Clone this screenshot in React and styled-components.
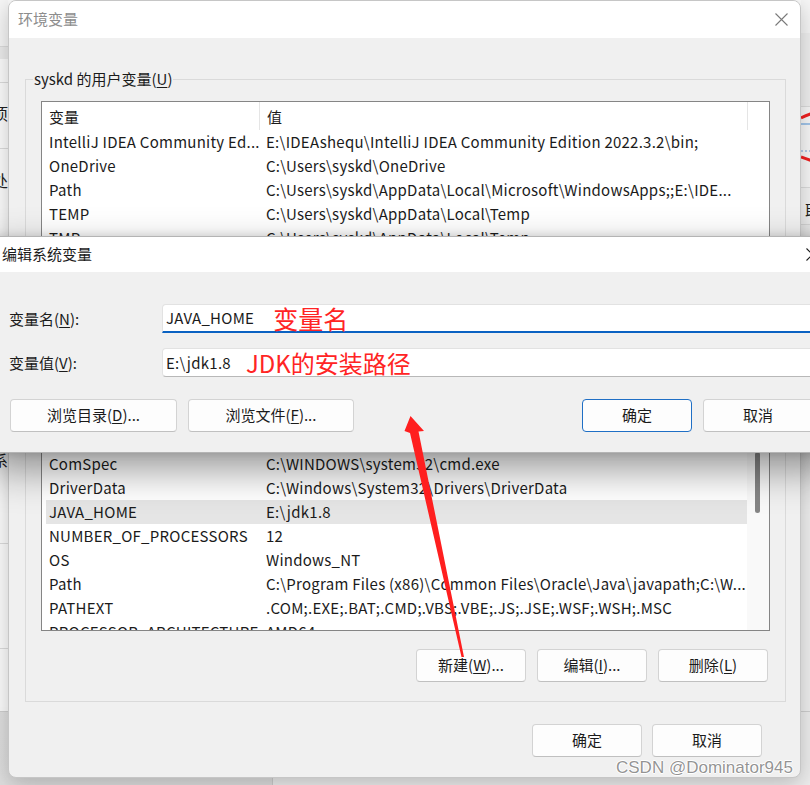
import React from 'react';
import styled, { createGlobalStyle } from 'styled-components';

const GlobalStyle = createGlobalStyle`
  html, body { margin: 0; padding: 0; }
  body {
    font-family: "Noto Sans CJK SC", "Noto Sans", sans-serif;
    font-size: 15px;
    line-height: 20px;
    color: #1b1b1b;
    background: #e4e4e4;
  }
  * { box-sizing: border-box; }
`;

const Desktop = styled.div`
  position: relative;
  width: 810px;
  height: 785px;
  overflow: hidden;
  background: linear-gradient(#ececec, #dedede);
`;

/* ---------- background window (System Properties) ---------- */
const BackWindow = styled.div`
  position: absolute;
  left: -300px;
  top: 0;
  width: 1120px;
  height: 712px;
  display: grid;
  grid-template-columns: 308px 793px 1fr;
  background: #fbfbfb;
  border-bottom: 1px solid #cfcfcf;
`;

const BackColumn = styled.div`
  display: flex;
  flex-direction: column;
  overflow: hidden;
  background: ${p => p.$bg || 'transparent'};
`;

const BackRow = styled.div`
  flex: none;
  height: ${p => p.$h}px;
  background: ${p => p.$bg || '#fcfcfc'};
  border-bottom: ${p => (p.$line ? '1px solid #dcdcdc' : 'none')};
  display: flex;
  align-items: flex-start;
  justify-content: ${p => p.$align || 'flex-end'};
  padding-top: ${p => p.$pt || 0}px;
  padding-left: ${p => p.$pl || 0}px;
  white-space: nowrap;
  overflow: hidden;
`;

const BackText = styled.span`
  font-size: 16px;
  line-height: 22px;
  color: #202020;
`;

const LowerPane = styled.div`
  position: absolute;
  left: 272px;
  top: 712px;
  width: 600px;
  height: 80px;
  background: #ededed;
  border-left: 1px solid #cdcdcd;
`;

/* ---------- generic window parts ---------- */
const Window = styled.div`
  position: absolute;
  left: ${p => p.$x}px;
  top: ${p => p.$y}px;
  width: ${p => p.$w}px;
  background: #f0f0f0;
  border: 1px solid ${p => (p.$active ? '#b4b4b4' : '#c6c6c6')};
  border-radius: 8px;
  box-shadow: ${p =>
    p.$active
      ? '0 16px 40px rgba(0,0,0,0.42), 0 0 10px rgba(0,0,0,0.12)'
      : '0 6px 22px rgba(0,0,0,0.22)'};
  display: flex;
  flex-direction: column;
  overflow: hidden;
`;

const TitleBar = styled.div`
  flex: none;
  height: ${p => p.$h}px;
  background: #ffffff;
  display: flex;
  align-items: center;
  justify-content: space-between;
  padding: 0 ${p => p.$pr}px 1px ${p => p.$pl}px;
  color: ${p => (p.$active ? '#1b1b1b' : '#8d8d8d')};
  font-size: 15px;
`;

const CloseIcon = ({ color }) => (
  <svg width="13" height="13" viewBox="0 0 13 13">
    <path d="M0.5 0.5 L12.5 12.5 M12.5 0.5 L0.5 12.5" stroke={color} strokeWidth="1.1" fill="none" />
  </svg>
);

const Mn = styled.span`
  text-decoration: underline;
  text-underline-offset: 2px;
  text-decoration-thickness: 1px;
`;

const Button = styled.button`
  flex: none;
  width: ${p => p.$w}px;
  height: 33px;
  padding: 0 0 1px;
  margin: 0;
  background: #fdfdfd;
  border: 1px solid ${p => (p.$default ? '#1f6fc5' : '#d3d3d3')};
  border-bottom-color: ${p => (p.$default ? '#1f6fc5' : '#c0c0c0')};
  border-radius: 4px;
  font-family: inherit;
  font-size: 15px;
  line-height: 20px;
  color: #1b1b1b;
`;

/* ---------- main dialog ---------- */
const MainBody = styled.div`
  display: flex;
  flex-direction: column;
  padding: 30px 14px 20px 16px;
`;

const Group = styled.fieldset`
  margin: 0 0 ${p => p.$mb || 0}px 0;
  padding: 11px 15px 19px;
  border: 1px solid #dadada;
  min-width: 0;
`;

const Legend = styled.legend`
  margin-left: -8px;
  padding: 0 1px;
  font-size: 15px;
  line-height: 22px;
  color: #1b1b1b;
`;

const ListBox = styled.div`
  height: ${p => p.$h}px;
  border: 1px solid #858585;
  background: #ffffff;
  display: flex;
  flex-direction: column;
  overflow: hidden;
`;

const ListHeader = styled.div`
  flex: none;
  height: 28px;
  display: grid;
  grid-template-columns: 218px 488px 1fr;
`;

const HeaderCell = styled.div`
  display: flex;
  align-items: center;
  padding: 1px 0 0 7px;
  border-right: ${p => (p.$last ? 'none' : '1px solid #e5e5e5')};
`;

const ListBody = styled.div`
  flex: 1;
  display: flex;
  min-height: 0;
`;

const Rows = styled.div`
  width: 701px;
  margin-left: 4px;
  display: flex;
  flex-direction: column;
`;

const Row = styled.div`
  flex: none;
  height: 24px;
  padding-bottom: 1px;
  display: grid;
  grid-template-columns: 213px 488px;
  align-items: center;
  background: ${p => (p.$selected ? '#e5e5e5' : 'transparent')};
`;

const Cell = styled.div`
  padding-left: ${p => p.$pl}px;
  white-space: nowrap;
  overflow: hidden;
  letter-spacing: 0.25px;
`;

const ScrollTrack = styled.div`
  flex: 1;
  background: ${p => (p.$visible ? '#f9f9f9' : '#ffffff')};
  padding-left: 8px;
`;

const ScrollThumb = styled.div`
  width: 5px;
  height: 61px;
  border-radius: 3px;
  background: #858585;
`;

const ButtonRow = styled.div`
  display: flex;
  justify-content: ${p => p.$justify || 'flex-end'};
  gap: ${p => p.$gap || 11}px;
  margin-top: ${p => p.$mt}px;
  padding: 0 ${p => p.$pr || 0}px 0 ${p => p.$pl || 0}px;
`;

const Spacer = styled.div`
  flex: 1;
`;

/* ---------- edit dialog ---------- */
const EditBody = styled.div`
  display: flex;
  flex-direction: column;
  padding: 32px 24px 20px 20px;
`;

const FieldRow = styled.div`
  display: grid;
  grid-template-columns: 153px 1fr;
  align-items: center;
  margin-top: ${p => p.$mt || 0}px;
`;

const FieldLabel = styled.div`
  font-size: 15px;
  line-height: 20px;
`;

const InputBox = styled.div`
  height: 29px;
  background: #ffffff;
  border: 1px solid #e2e2e2;
  border-bottom: ${p => (p.$focused ? '2px solid #0a62c2' : '1px solid #b8b8b8')};
  border-radius: 4px 0 0 ${p => (p.$focused ? 0 : 4)}px;
  display: flex;
  align-items: center;
  padding-left: 3px;
  white-space: nowrap;
`;

const InputValue = styled.span`
  font-size: 15px;
  letter-spacing: 0.25px;
`;

const RedNote = styled.span`
  margin-left: ${p => p.$ml}px;
  font-size: ${p => p.$size}px;
  line-height: 24px;
  color: #ff2424;
`;

/* ---------- overlays ---------- */
const Annotation = styled.svg`
  position: absolute;
  left: 0;
  top: 0;
  pointer-events: none;
`;

const Watermark = styled.div`
  position: absolute;
  left: 616px;
  top: 758px;
  font-family: "Liberation Sans", Arial, sans-serif;
  font-size: 17px;
  line-height: 20px;
  color: rgba(118, 118, 118, 0.78);
  text-shadow: 1px 0 0 #fff, -1px 0 0 #fff, 0 1px 0 #fff, 0 -1px 0 #fff;
  white-space: nowrap;
`;

const userVars = [
  ['IntelliJ IDEA Community Ed...', 'E:\\IDEAshequ\\IntelliJ IDEA Community Edition 2022.3.2\\bin;'],
  ['OneDrive', 'C:\\Users\\syskd\\OneDrive'],
  ['Path', 'C:\\Users\\syskd\\AppData\\Local\\Microsoft\\WindowsApps;;E:\\IDE...'],
  ['TEMP', 'C:\\Users\\syskd\\AppData\\Local\\Temp'],
  ['TMP', 'C:\\Users\\syskd\\AppData\\Local\\Temp'],
];

const sysVars = [
  ['ComSpec', 'C:\\WINDOWS\\system32\\cmd.exe'],
  ['DriverData', 'C:\\Windows\\System32\\Drivers\\DriverData'],
  ['JAVA_HOME', 'E:\\jdk1.8', true],
  ['NUMBER_OF_PROCESSORS', '12'],
  ['OS', 'Windows_NT'],
  ['Path', 'C:\\Program Files (x86)\\Common Files\\Oracle\\Java\\javapath;C:\\W...'],
  ['PATHEXT', '.COM;.EXE;.BAT;.CMD;.VBS;.VBE;.JS;.JSE;.WSF;.WSH;.MSC'],
  ['PROCESSOR_ARCHITECTURE', 'AMD64'],
];

function VarList({ height, rows, scroll }) {
  return (
    <ListBox $h={height}>
      <ListHeader>
        <HeaderCell>变量</HeaderCell>
        <HeaderCell>值</HeaderCell>
        <HeaderCell $last />
      </ListHeader>
      <ListBody>
        <Rows>
          {rows.map(([name, value, selected]) => (
            <Row key={name + value} $selected={selected}>
              <Cell $pl={3}>{name}</Cell>
              <Cell $pl={7}>{value}</Cell>
            </Row>
          ))}
        </Rows>
        <ScrollTrack $visible={scroll}>{scroll && <ScrollThumb />}</ScrollTrack>
      </ListBody>
    </ListBox>
  );
}

export default function App() {
  return (
    <>
      <GlobalStyle />
      <Desktop>
        <BackWindow>
          <BackColumn>
            <BackRow $h={47} $bg="#f6f6f6" $line />
            <BackRow $h={12} $bg="#ebebeb" />
            <BackRow $h={24} $line />
            <BackRow $h={66} $line $pt={19}>
              <BackText>要进行大多数更改，请使用选项</BackText>
            </BackRow>
            <BackRow $h={300} $pt={20}>
              <BackText>视觉效果，处理器计划，内存使用处</BackText>
            </BackRow>
            <BackRow $h={95} $line>
              <BackText>系统启动、系统故障和调试信息系</BackText>
            </BackRow>
            <BackRow $h={105} $line />
            <BackRow $h={58} />
          </BackColumn>
          <BackColumn />
          <BackColumn $bg="#efefef">
            <BackRow $h={33} $bg="#f6f6f6" />
            <BackRow $h={74} $bg="#efefef" $line />
            <BackRow $h={81} $bg="#f7f7f7" $line>
              <svg width="19" height="81" viewBox="0 0 19 81">
                <path d="M0 11 Q8 7 19 4" stroke="#f02020" strokeWidth="3" fill="none" />
                <line x1="0" y1="17" x2="19" y2="17" stroke="#86b4e4" strokeWidth="1.5" />
                <line x1="0" y1="44" x2="19" y2="44" stroke="#6f9fd6" strokeWidth="1" strokeDasharray="2 2" />
                <path d="M0 50 Q8 53 19 56" stroke="#f02020" strokeWidth="3" fill="none" />
              </svg>
            </BackRow>
            <BackRow $h={37} $bg="#f3f3f3" $line $align="flex-start" $pl={4} $pt={11}>
              <BackText>取消</BackText>
            </BackRow>
          </BackColumn>
        </BackWindow>
        <LowerPane />

        <Window $x={8} $y={0} $w={793}>
          <TitleBar $h={37} $pl={9} $pr={12}>
            <span>环境变量</span>
            <CloseIcon color="#7a7a7a" />
          </TitleBar>
          <MainBody>
            <Group $mb={18}>
              <Legend>
                syskd 的用户变量(<Mn>U</Mn>)
              </Legend>
              <VarList height={200} rows={userVars} />
              <ButtonRow $mt={18} $pr={2} $gap={11}>
                <Button $w={110}>新建(<Mn>N</Mn>)...</Button>
                <Button $w={110}>编辑(<Mn>E</Mn>)...</Button>
                <Button $w={110}>删除(<Mn>D</Mn>)</Button>
              </ButtonRow>
            </Group>
            <Group>
              <Legend>
                系统变量(<Mn>S</Mn>)
              </Legend>
              <VarList height={208} rows={sysVars} scroll />
              <ButtonRow $mt={18} $pr={2} $gap={11}>
                <Button $w={110}>新建(<Mn>W</Mn>)...</Button>
                <Button $w={110}>编辑(<Mn>I</Mn>)...</Button>
                <Button $w={110}>删除(<Mn>L</Mn>)</Button>
              </ButtonRow>
            </Group>
            <ButtonRow $mt={22} $pr={24} $gap={10}>
              <Button $w={110}>确定</Button>
              <Button $w={110}>取消</Button>
            </ButtonRow>
          </MainBody>
        </Window>

        <Window $x={-12} $y={236} $w={850} $active>
          <TitleBar $h={35} $pl={13} $pr={18} $active>
            <span>编辑系统变量</span>
            <CloseIcon color="#1b1b1b" />
          </TitleBar>
          <EditBody>
            <FieldRow>
              <FieldLabel>
                变量名(<Mn>N</Mn>):
              </FieldLabel>
              <InputBox $focused>
                <InputValue>JAVA_HOME</InputValue>
                <RedNote $ml={19} $size={25}>变量名</RedNote>
              </InputBox>
            </FieldRow>
            <FieldRow $mt={15}>
              <FieldLabel>
                变量值(<Mn>V</Mn>):
              </FieldLabel>
              <InputBox>
                <InputValue>E:\jdk1.8</InputValue>
                <RedNote $ml={15} $size={24}>JDK的安装路径</RedNote>
              </InputBox>
            </FieldRow>
            <ButtonRow $mt={22} $justify="flex-start" $gap={11} $pl={1}>
              <Button $w={167}>浏览目录(<Mn>D</Mn>)...</Button>
              <Button $w={166}>浏览文件(<Mn>F</Mn>)...</Button>
              <Spacer />
              <Button $w={110} $default>确定</Button>
              <Button $w={110}>取消</Button>
            </ButtonRow>
          </EditBody>
        </Window>

        <Annotation width="810" height="785" viewBox="0 0 810 785">
          <polygon
            points="410.5,416 424,431 418.5,431.5 464,657 461.5,657 410,433 404.5,431"
            fill="#ff1f1f"
          />
        </Annotation>
        <Watermark>CSDN @Dominator945</Watermark>
      </Desktop>
    </>
  );
}
